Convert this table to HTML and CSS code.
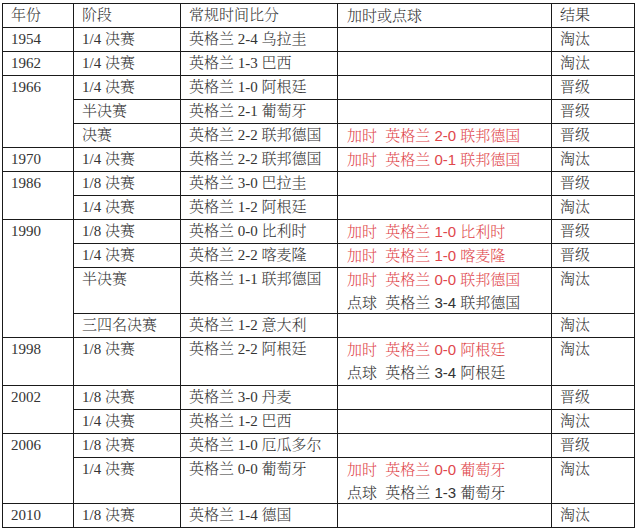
FILE: index.html
```html
<!DOCTYPE html>
<html lang="zh">
<head>
<meta charset="utf-8">
<link rel="stylesheet" href="styles.css">
</head>
<body>
<table class="tbl">
<colgroup>
<col class="c1"><col class="c2"><col class="c3"><col class="c4"><col class="c5">
</colgroup>
<tr><td>年份</td><td>阶段</td><td>常规时间比分</td><td class="ex">加时或点球</td><td>结果</td></tr>
<tr><td>1954</td><td>1/4 决赛</td><td>英格兰 2-4 乌拉圭</td><td></td><td>淘汰</td></tr>
<tr><td>1962</td><td>1/4 决赛</td><td>英格兰 1-3 巴西</td><td></td><td>淘汰</td></tr>
<tr><td rowspan="3">1966</td><td>1/4 决赛</td><td>英格兰 1-0 阿根廷</td><td></td><td>晋级</td></tr>
<tr><td>半决赛</td><td>英格兰 2-1 葡萄牙</td><td></td><td>晋级</td></tr>
<tr><td>决赛</td><td>英格兰 2-2 联邦德国</td><td class="ex"><span class="red">加时&nbsp;&nbsp;英格兰 2-0 联邦德国</span></td><td>晋级</td></tr>
<tr><td>1970</td><td>1/4 决赛</td><td>英格兰 2-2 联邦德国</td><td class="ex"><span class="red">加时&nbsp;&nbsp;英格兰 0-1 联邦德国</span></td><td>淘汰</td></tr>
<tr><td rowspan="2">1986</td><td>1/8 决赛</td><td>英格兰 3-0 巴拉圭</td><td></td><td>晋级</td></tr>
<tr><td>1/4 决赛</td><td>英格兰 1-2 阿根廷</td><td></td><td>淘汰</td></tr>
<tr><td rowspan="4">1990</td><td>1/8 决赛</td><td>英格兰 0-0 比利时</td><td class="ex"><span class="red">加时&nbsp;&nbsp;英格兰 1-0 比利时</span></td><td>晋级</td></tr>
<tr><td>1/4 决赛</td><td>英格兰 2-2 喀麦隆</td><td class="ex"><span class="red">加时&nbsp;&nbsp;英格兰 1-0 喀麦隆</span></td><td>晋级</td></tr>
<tr class="dbl"><td>半决赛</td><td>英格兰 1-1 联邦德国</td><td class="ex"><div class="ln red">加时&nbsp;&nbsp;英格兰 0-0 联邦德国</div><div class="ln ln2">点球&nbsp;&nbsp;英格兰 3-4 联邦德国</div></td><td>淘汰</td></tr>
<tr><td>三四名决赛</td><td>英格兰 1-2 意大利</td><td></td><td>淘汰</td></tr>
<tr class="dbl tall"><td>1998</td><td>1/8 决赛</td><td>英格兰 2-2 阿根廷</td><td class="ex"><div class="ln red">加时&nbsp;&nbsp;英格兰 0-0 阿根廷</div><div class="ln ln2">点球&nbsp;&nbsp;英格兰 3-4 阿根廷</div></td><td>淘汰</td></tr>
<tr><td rowspan="2">2002</td><td>1/8 决赛</td><td>英格兰 3-0 丹麦</td><td></td><td>晋级</td></tr>
<tr><td>1/4 决赛</td><td>英格兰 1-2 巴西</td><td></td><td>淘汰</td></tr>
<tr><td rowspan="2">2006</td><td>1/8 决赛</td><td>英格兰 1-0 厄瓜多尔</td><td></td><td>晋级</td></tr>
<tr class="dbl"><td>1/4 决赛</td><td>英格兰 0-0 葡萄牙</td><td class="ex"><div class="ln red">加时&nbsp;&nbsp;英格兰 0-0 葡萄牙</div><div class="ln ln2">点球&nbsp;&nbsp;英格兰 1-3 葡萄牙</div></td><td>淘汰</td></tr>
<tr><td>2010</td><td>1/8 决赛</td><td>英格兰 1-4 德国</td><td></td><td>淘汰</td></tr>
</table>
</body>
</html>
```
FILE: styles.css
```css
html, body {
  margin: 0;
  padding: 0;
  background: #ffffff;
}
.tbl {
  margin: 3px 0 0 2px;
  border-collapse: collapse;
  table-layout: fixed;
  width: 632px;
  font-family: "Liberation Serif", "Noto Serif CJK SC", "Noto Sans CJK SC", serif;
  font-size: 15px;
  font-weight: 300;
  color: #333333;
}
.c1 { width: 71px; }
.c2 { width: 107px; }
.c3 { width: 157px; }
.c4 { width: 214px; }
.c5 { width: 83px; }
.tbl td {
  border: 1px solid #1a1a1a;
  padding: 0 0 0 8px;
  height: 23px;
  line-height: 23px;
  vertical-align: top;
  white-space: nowrap;
  overflow: hidden;
}
.tbl td.ex {
  padding-left: 9px;
  font-family: "Liberation Sans", "Noto Serif CJK SC", "Noto Sans CJK SC", sans-serif;
}
.tbl .dbl td {
  height: 45px;
}
.tbl .tall td {
  height: 47px;
}
.ln {
  height: 23px;
  line-height: 23px;
  overflow: hidden;
}
.ln2 {
  height: 22px;
}
.tall .ln2 {
  height: 24px;
}
.red {
  color: #e0474c;
}
```
